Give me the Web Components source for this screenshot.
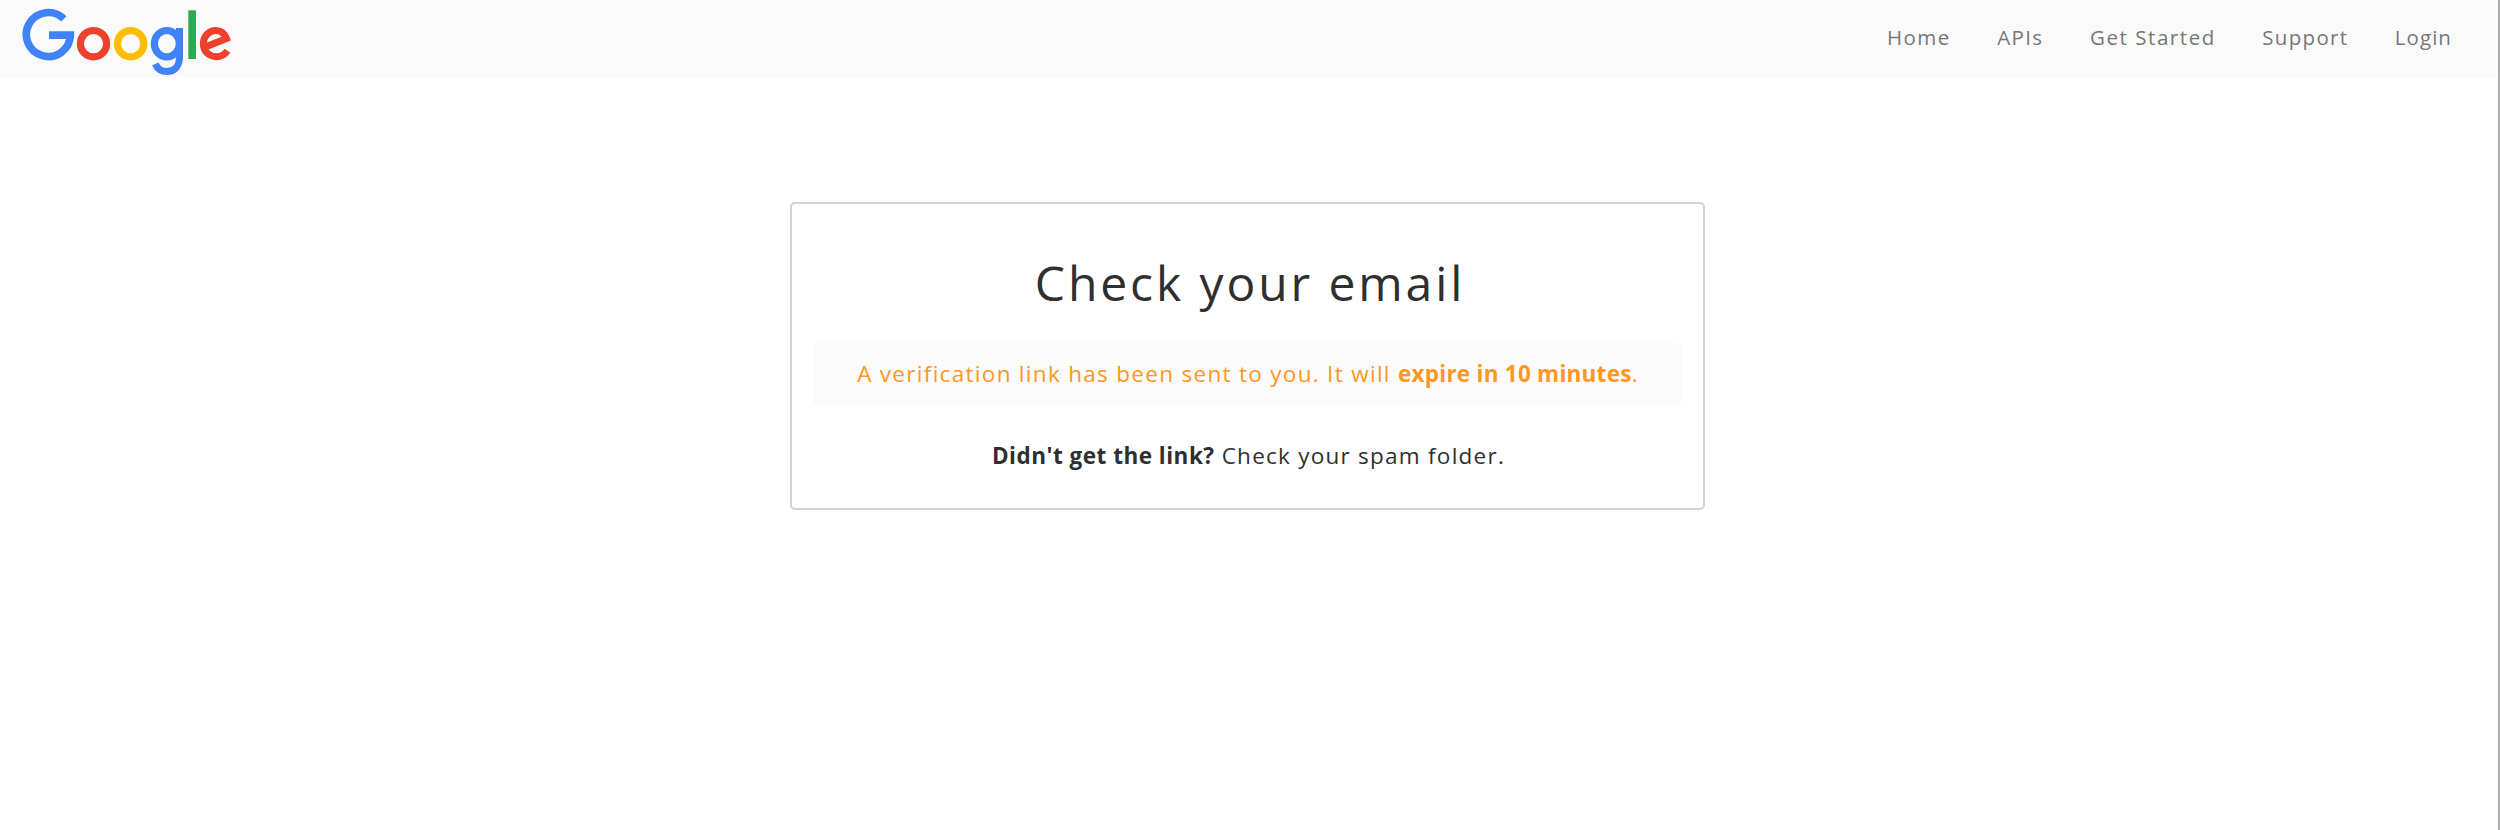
<!DOCTYPE html>
<html lang="en">
<head>
<meta charset="utf-8">
<title>Check your email</title>
<style>
  html, body { margin: 0; height: 100%; }
  body { background: #fff; font-family: "Open Sans", "Noto Sans", sans-serif; color: #2f2f2f; }
</style>
</head>
<body>
<app-shell>
  <top-bar slot="header">
    <google-logo slot="brand"></google-logo>
    <nav-link style="--track:1.4px">Home</nav-link>
    <nav-link style="--track:1.4px">APIs</nav-link>
    <nav-link style="--track:1.55px">Get Started</nav-link>
    <nav-link style="--track:1.3px">Support</nav-link>
    <nav-link style="--track:1.05px">Login</nav-link>
  </top-bar>
  <message-card>
    <span slot="title">Check your email</span>
    <notice-bar>A verification link has been sent to you. It will <strong-text style="--track:.25px">expire in 10 minutes</strong-text>.</notice-bar>
    <help-line slot="footer"><strong-text style="--track:.5px">Didn't get the link?</strong-text> Check your spam folder.</help-line>
  </message-card>
</app-shell>
<script>
const define = (name, html) => {
  const template = document.createElement('template');
  template.innerHTML = html;
  customElements.define(name, class extends HTMLElement {
    constructor() {
      super();
      this.attachShadow({ mode: 'open' }).append(template.content.cloneNode(true));
    }
  });
};

define('app-shell', `
  <style>
    :host { display: flex; flex-direction: column; box-sizing: border-box; height: 100vh; border-right: 2px solid #aaa; padding-right: 1px; overflow: hidden; }
    main { display: flex; justify-content: center; padding: 125px 2px 0 0; }
  </style>
  <slot name="header"></slot>
  <main><slot></slot></main>`);

define('top-bar', `
  <style>
    :host { display: flex; align-items: flex-start; justify-content: space-between; flex: none; box-sizing: border-box; height: 77px; background: #fafafa; padding: 0 45px 0 20px; }
    nav { display: flex; gap: 46.5px; padding-top: 22px; }
  </style>
  <slot name="brand"></slot>
  <nav><slot></slot></nav>`);

define('nav-link', `
  <style>
    :host { display: block; }
    a { display: block; font-size: 20.5px; line-height: 30px; letter-spacing: var(--track, 1.5px); color: #777; white-space: nowrap; }
  </style>
  <a><slot></slot></a>`);

define('google-logo', `
  <style>:host { display: block; width: 214px; height: 77px; } svg { display: block; }</style>
  <svg width="214" height="77" viewBox="60 0 642 231" fill="none" role="img" aria-label="Google">
    <path d="M191.500 56.700 A66 66 0 1 0 211 105.500 H147" stroke="#4083f7" stroke-width="23"/>
    <ellipse cx="280.500" cy="131" rx="39.500" ry="39.500" stroke="#ee412d" stroke-width="21.500"/>
    <ellipse cx="392" cy="131" rx="39.500" ry="39.500" stroke="#fdbd05" stroke-width="21.500"/>
    <ellipse cx="500.500" cy="131" rx="37.500" ry="39.500" stroke="#4083f7" stroke-width="21.500"/>
    <path d="M538.500 84 V172 C538.500 199 523 214.500 501.500 214.500 C484 214.500 472 206 466 191.500" stroke="#4083f7" stroke-width="21"/>
    <path d="M576.500 31 V177" stroke="#2fa84f" stroke-width="23"/>
    <path d="M682.500 152 C674 164 663 170 649 170 C626 170 610 153 610 131 C610 108 627 91.500 647 91.500 C663 91.500 674 101 679.500 115.500 L618 140.500" stroke="#ee412d" stroke-width="21" stroke-linejoin="miter"/>
  </svg>`);

define('message-card', `
  <style>
    :host { display: flex; flex-direction: column; box-sizing: border-box; width: 915px; height: 308px; border: 2px solid #d3d3d3; border-radius: 5px; padding: 46px 21px 0; }
    h1 { margin: 0; padding-left: 5px; font-size: 48px; line-height: 66px; font-weight: 400; letter-spacing: 2.9px; text-align: center; }
    .body { margin-top: 27px; }
    .foot { margin-top: 36px; }
  </style>
  <h1><slot name="title"></slot></h1>
  <div class="body"><slot></slot></div>
  <div class="foot"><slot name="footer"></slot></div>`);

define('notice-bar', `
  <style>
    :host { display: block; box-sizing: border-box; height: 62px; padding: 16px 0 0 1px; border-radius: 5px; background: #fbfbfb; color: #ff9720; font-size: 22.5px; line-height: 30px; letter-spacing: 1.3px; text-align: center; white-space: nowrap; }
  </style>
  <slot></slot>`);

define('help-line', `
  <style>
    :host { display: block; padding-left: 2px; font-size: 22.5px; line-height: 30px; letter-spacing: 1.25px; text-align: center; white-space: nowrap; }
  </style>
  <slot></slot>`);

define('strong-text', `
  <style>:host { display: inline; } b { font-weight: 700; letter-spacing: var(--track, 0); }</style><b><slot></slot></b>`);
</script>
</body>
</html>
